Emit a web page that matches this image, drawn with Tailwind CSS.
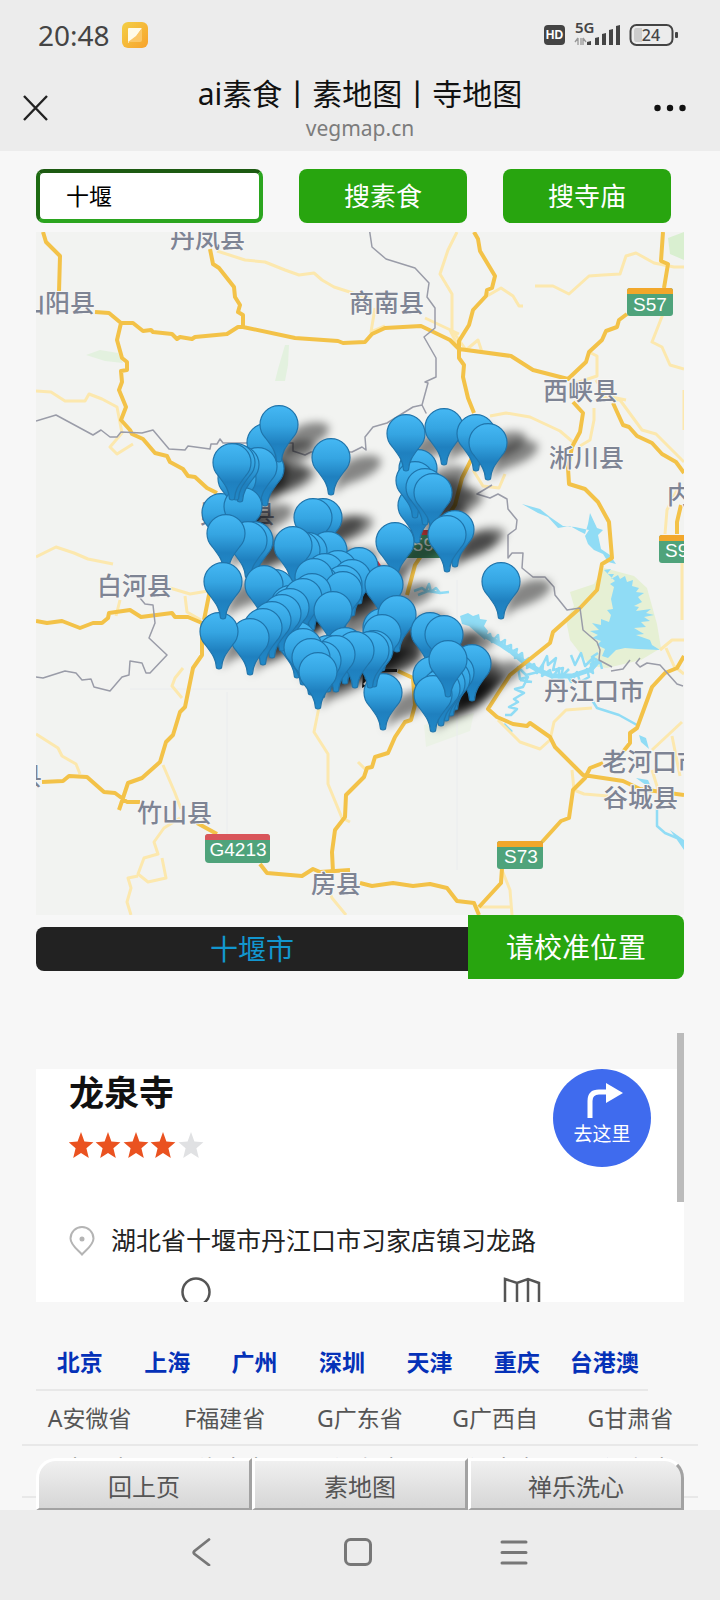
<!DOCTYPE html>
<html lang="zh-CN">
<head>
    <meta charset="UTF-8">
    <meta name="viewport" content="width=device-width, initial-scale=1.0">
    <title>ai素食丨素地图丨寺地图</title>
    <script src="https://cdn.jsdelivr.net/npm/@tailwindcss/browser@4"></script>
</head>
<body class="bg-[#f7f7f7] font-['Noto_Sans','Noto_Sans_CJK_SC',sans-serif] text-[#111]">

    <!-- Status bar + title -->
    <header class="bg-[#ececec]">
        <div class="flex h-[70px] items-center justify-between pl-[38px] pr-[42px]">
            <div class="flex items-center gap-3 text-[28px] leading-none text-[#444]">
                <span>20:48</span>
                <svg class="size-[26px]" viewBox="0 0 26 26">
                    <defs>
                        <linearGradient id="app" x1="0" y1="0" x2="1" y2="1"><stop offset="0" stop-color="#f3cf45"/><stop offset="1" stop-color="#f8a22c"/></linearGradient>
                    </defs>
                    <rect width="26" height="26" rx="6" fill="url(#app)"/>
                    <path d="M6 7q0-1 1-1h13L14 15l-8 6z" fill="#fffbe8"/>
                    <path d="M20 6v12q0 2-2 2H6l8-6z" fill="#fbc766"/>
                </svg>
            </div>
            <div class="flex items-center text-[#444]">
                <svg class="h-[30px] w-[136px]" viewBox="0 0 136 30" fill="currentColor">
                    <rect x="2" y="5" width="21" height="20" rx="4"/>
                    <text x="12.500" y="19" text-anchor="middle" font-family="Liberation Sans" font-size="12" font-weight="700" fill="#fff">HD</text>
                    <text x="33" y="13" font-family="Noto Sans" font-size="15" font-weight="600">5G</text>
                    <path d="M36 18v7M36 18l-3 4M39 18v7M41 18v7M41 18l3 4" stroke="#999" stroke-width="1.300" fill="none"/>
                    <path d="M45 22l4-1v4h-4zM53 18l4-1v8h-4zM60 14l4-1v12h-4zM67 10l4-1v16h-4zM74 6l4-1v20h-4z"/>
                    <rect x="88.500" y="5" width="42" height="20" rx="6" fill="none" stroke="currentColor" stroke-width="2"/>
                    <path d="M94 8h6v14h-6q-2 0-2-3v-8q0-3 2-3z" fill="#ccc"/>
                    <rect x="133" y="12" width="3" height="6" rx="1"/>
                    <text x="109" y="21" text-anchor="middle" font-family="Noto Sans" font-size="16" font-weight="500">24</text>
                </svg>
            </div>
        </div>
        <div class="flex h-[81px] justify-between pr-[34px] pl-[22px]">
            <button class="mt-6 h-7 w-11" aria-label="关闭">
                <svg class="size-7" viewBox="0 0 28 28" fill="none" stroke="#222" stroke-width="2.400"><path d="M2 2l23 24M25 2L2 26"/></svg>
            </button>
            <div class="text-center">
                <h1 class="mt-1 text-[30px] leading-[40px]">ai素食丨素地图丨寺地图</h1>
                <p class="text-[21px] leading-7 text-[#7c7c7c]">vegmap.cn</p>
            </div>
            <button class="mt-6 h-7 w-8" aria-label="更多">
                <svg class="h-7 w-8" viewBox="0 0 32 28" fill="#111"><circle cx="3.500" cy="14" r="3.200"/><circle cx="16" cy="14" r="3.200"/><circle cx="28.500" cy="14" r="3.200"/></svg>
            </button>
        </div>
    </header>

    <main>
        <!-- Search -->
        <form class="mx-9 mt-[18px] flex h-[54px] gap-9 pr-[13px] text-[26px] text-white" onsubmit="return false">
            <input type="text" value="十堰" aria-label="城市" class="w-[227px] rounded-lg border-4 border-t-[#1d5a12] border-r-[#2ba51f] border-b-[#2ba51f] border-l-[#1d6a12] bg-white pl-[26px] text-[23px] text-black outline-none">
            <button type="submit" class="flex-1 rounded-lg bg-[#28a50f]">搜素食</button>
            <button type="submit" class="flex-1 rounded-lg bg-[#28a50f]">搜寺庙</button>
        </form>

        <!-- Map -->
        <svg id="map" class="mx-9 mt-[9px] block w-[calc(100%-72px)] bg-[#f2f3f1]" viewBox="36 232 648 683" fill="none" stroke-linejoin="round">
            <defs>
                <linearGradient id="pinFill" x1="0" y1="0" x2="0" y2="1">
                    <stop offset="0" stop-color="#45b8f4"/><stop offset=".35" stop-color="#35a5e2"/><stop offset=".68" stop-color="#1f80bf"/><stop offset="1" stop-color="#2189c8"/>
                </linearGradient>
                <path id="pin" d="M-2.500 37C-3 28-6 24-13.500 14A19 19 0 1 1 13.500 14C6 24 3 28 2.500 37Q0 39-2.500 37z" fill="url(#pinFill)" stroke="#1f74ab" stroke-width="1.200"/>
                <path id="shade" d="M0 38C8 27 4 18 12 9C22-4 50-4 50 4C50 16 26 24 14 28z" fill="#000"/>
                <filter id="soft" x="-20%" y="-20%" width="140%" height="140%"><feGaussianBlur stdDeviation="4"/></filter>
            </defs>

            <!-- parks -->
            <g fill="#e3f1df">
                <path d="M86 355l14-5 18 3 5 10-18-2zM285 345l4 0-1 20-3 16-10 0 3-12z"/>
                <path d="M668 238l16-6v28l-14-6z" fill="#d9efd0"/>
                <path d="M570 592l24-8 10-16 30 8 13 12 10 36 4 24-20 12-34 8-17-2-20-26-4-20 8-14z" fill="#e6f0d4"/>
                <path d="M424 725l50-12-4 18-44 16z" fill="#ebf2e6"/>
            </g>

            <!-- water -->
            <g fill="#90dcf5">
                <path d="M604 570l7-1-4 5 7 0-3 5 7-4 2 4 5-3 2 6 6-2-1 6 7 2-3 4 8 1-6 4 4 5-8 4 5 1-3 4 15-2-5 4 8 2-10 2 6 4-9 1 5 5-12 1 10 6-8 1 14 5 2 5 8 5-22-1-13-1-9 2-8 8-6-2 3-7-8-4 4-4-9-3 6-3-8-4 9-1-7-7 9 2 0-6 8 3 2-7-4-5 6-1-2-10 3-12-4-3 5-3z"/>
                <path d="M522 504l16 9 10 4 10 11 12-2 9 5 6 3 3-10 2-11 7 15 6 2-5 5 3 14 9 6 6 9-8-2-5-8-9-4-6-6-3-8 4-6-14-3-12-1-13-9-10-8z"/>
                <path d="M460 616l8-3 5 3 6-2 1 5 7 1-3 6 4 5-3 9-7-6-9-8-7-2z"/>
                <path d="M639 735l7 3 3 11-8-7zM636 778l12 2 4 9-9-6zM670 830l14 10v10l-9-13z"/>
            </g>
            <g stroke="#90dcf5" stroke-width="2.500">
                <path d="M414 591l8-3 4 3 3-7 2 8 5-4 4 5 9-1M418 595l10-4 12 2"/>
                <path d="M484 630l3 7 3-3 2 8 6-7 1 9 6-4-1 8 7-3 0 7 6-3-2 9 7-5 1 9 6-4-2 10 7-4 3 9 6-9-1 12 8-6 2 8 7-10 0 12 8-5 4 7 6-10 3 10 9-5-2-8 6 4-2-9 6-4-5-3 6-4"/>
                <path d="M486 636l14 8 12 8 12 10 14 8 14 6 20 0 18-6 8-10" stroke-width="5"/>
                <path d="M543 664l4-8 1 9 8-7-3 12 10-2-2 9 8-8M571 655l4 10 6-12 4 13 8-8-1 12 8-9 2 8M538 672l-12 3-8-8 2 12 8-2-5 10-8 2 9 4-10 6 4 3-9 5 8 2-6 6-6 0M520 680l12 2M504 724l8 8"/>
                <path d="M592 700l5 8 22 7 18 10M657 808v18l8 7 12 5"/>
            </g>
            <path d="M130 689H466M227 692V834M457 580V870" stroke="#eaecee"/>

            <!-- minor roads -->
            <g stroke="#fce8ae" stroke-width="3">
                <path d="M217 251l28 9 20 2 20 8 14 5 15-2 8 7 12 7 25 8 10 4M36 391l15 1 14 9 20 0 4-7 13 5 15 8 5 26-12 14 7 7 16-10M36 557l20-10 18 6 14 6 25 5"/>
                <path d="M457 232l-9 18-8 24 12 20 0 36 14 20 12-10 4 12M535 286l18 0 16 8 20-18 14-1 17-1 6-18 10-3 18 10 20 4 18 0M663 314l-11 28 10 5 8 18 14 4M487 296l14-8 12 8 6 10 4 0M385 326l-14 6 4-24M425 318l34 16"/>
                <path d="M573 384l24-8 0-20-8-4M600 398l20 2 22 30 14 4 28 28M490 416l16-3 24 4 30 14 14 12M594 408l0 12-4 20-10 6M473 470l10 16 16 2 6-14M684 390v40M665 534l2-24 10-20M596 380l10 16 20 4"/>
                <path d="M170 588l20 6 18-3M185 596l2 16 14 8M120 600l-4 16M183 668l-8 10-3 8 10 12M163 765l12 28 6 16M36 734l22 14 4 8 14 8 4 10M180 818l-16 10-10 14 4 12-14 4-6 16 10 8 18-4-4-20M138 876l-10 2 3 10-4 14 4 13M320 702l-6 30 14 22 0 30 14 34 8 4M324 878l8 20 14 17M358 762l8 8"/>
                <path d="M498 720l22 22 20 7 10-9 4-18 12-12 26-2M572 770l2 20 10 4 24 2M660 650l12-10h12M666 648l8 18 10 8M652 750l30-28M672 736l8 40M652 770l8 26M502 870l8 20 2 25M478 907h32M682 560v60M460 350l-10-20"/>
            </g>

            <!-- main roads -->
            <g stroke="#f3c248" stroke-width="4">
                <path d="M43 232l3 10 14 14-1 36M95 312l14 1 12 10h12l10 8 8-1 2 2 19 2 5 5 3-2 12 2 3-2 32-3 11-7h5l52 11 43 3 5 2 22-1 7-8 13-6 36-2 29 14 9 9 52 7 22 14 35 9 18-17 3-10 13-12 4-9 11-4 2-7 8-6M210 249l3 15 6 4 15 19 1 10 5 8-2 7 5 3v12M121 323l-4 17 5 18 5 4v8l-6 1 1 11-3 8 7 17-5 13 9 10 2 4 11 5 12 14 12 3 3 6 13 7 5 7 7 1 12 11 10 5M474 232l4 7 2 12 15 25-3 12-5 2-1 6-13 14-4 15-10 16v17l5 7-1 12 5 21 6 15M472 458l-10 20-7 27-40 60-8 30M573 402l10 11-3 19-8 15-4 21 1 16 16 5 13 13 11 20 3 36-10 6-5 26-17 18-27 24-3 11-40 32-13 20-9 14 9 8 16 7 14 2 3-3 20 14 5 10 28 28 40 6 17 8 44 6M613 403l10 22 6 2 8 9 15 7 10 11 14 8 8 11M663 232l-2 29 7 3-4 24M681 505l-4 17v12M684 656l-7 12-12 5-13 14-15 41-7 5v10l-8 10M603 763l-13 5-5 10-12 12-4 28-8 3-19 21M502 868l-1 15-22 24M360 883l12 3 21-3 20 3 17-2 17 4 10 13 17 2 5 12M333 872l-1-20 3-22 10-13 1-22 18-18 3-9 5-1 3-10 13-4 7-16 10-15 6-2 4-15-2-27-15-7M36 621l11 2 15-2 18 7 13-5 9 0 6-5 1-5 21-3 11 7 31-4 3 4h13l14 6v32l-9 13-8 39-5 5-7 23-7 7-6 20-18 16-14 5-9 27M42 782l21-1 6-5 18 1 17 15 11 1 12 9h13M197 823l20 11M260 864l7 9 35 3 11-7 7 3 30-2M204 620l8-40"/>
            </g>

            <!-- borders -->
            <path stroke="#9a9ca8" stroke-width="1.500" d="M36 421l20-6 37 20 8-5 9 7h7l4-5 21 1 11-3 16 19 16 1 3-4 22 3 1-5h6l3-5 3 4h70v8l12 4 6-3h41l10-5 4 3-1-13 8-10 14-4 26-16 9-2 4 8-4-8 6-22-3-1 11-5v-19l-12-21 11-9v-20l-8-11 2-14-14-15-29-9-14-12-3-20M492 485l-15 9 13 4 8-4 9 5 1 10 9 11-1 9-8 6v23l4-5h11l-1 15 11 9h12l9 10 1 8 12 15 13-2 3 22 14 12 3 8-1 10 13 7M611 671l12-2 7-9M640 658l-4 5 4 4 7-4 13 2 17 19 6 2M140 598l5 6 8 1 2 18-6 15 18 17-17 18h-4l-4-10-12-2-1 14-7 2-12 14-16-4-3-8-9 1-6-7-11-2-22 7-7-1"/>

            <!-- place names -->
            <g font-family="Noto Sans CJK SC" font-size="25" font-weight="500" fill="#7e8494" stroke="#f6f6f4" stroke-width="2" paint-order="stroke">
                <text x="170" y="248">丹凤县</text>
                <text x="20" y="312">山阳县</text>
                <text x="349" y="312">商南县</text>
                <text x="543" y="400">西峡县</text>
                <text x="549" y="467">淅川县</text>
                <text x="667" y="504">内乡县</text>
                <text x="97" y="595">白河县</text>
                <text x="200" y="523">郧西县</text>
                <text x="544" y="700">丹江口市</text>
                <text x="602" y="771">老河口市</text>
                <text x="603" y="807">谷城县</text>
                <text x="137" y="822">竹山县</text>
                <text x="311" y="893">房县</text>
                <text x="17" y="785">县</text>
            </g>

            <!-- road shields -->
            <g font-family="Liberation Sans" font-size="19" fill="#fff" stroke="none" text-anchor="middle">
                <rect x="627" y="288" width="46" height="28" rx="3" fill="#4fa37b"/><path d="M627 294v-3q0-3 3-3h40q3 0 3 3v3z" fill="#f2a72b"/><text x="650" y="311">S57</text>
                <rect x="659" y="535" width="46" height="28" rx="3" fill="#4fa37b"/><path d="M659 541v-3q0-3 3-3h40q3 0 3 3v3z" fill="#f2a72b"/><text x="682" y="557">S95</text>
                <rect x="497" y="841" width="46" height="28" rx="3" fill="#4fa37b"/><path d="M497 847v-3q0-3 3-3h40q3 0 3 3v3z" fill="#f2a72b"/><text x="521" y="863">S73</text>
                <rect x="205" y="834" width="65" height="29" rx="4" fill="#4fa37b"/><path d="M205 840v-3q0-3 3-3h59q3 0 3 3v3z" fill="#d9555a"/><text x="238" y="856">G4213</text>
                <rect x="398" y="530" width="50" height="28" rx="3" fill="#3e8660"/><path d="M398 535v-5h50v5z" fill="#c63a3c"/><text x="416" y="551" fill="#d5ddd6">G59</text>
            </g>

            <g id="shadows" filter="url(#soft)"></g>
            <path d="M366 562l12-1 4 6-12 2z" fill="#d3202c"/>
            <path d="M382 669h15v3h-15zM363 674l5-2 0 4-4 2 3 2-4 4 3 2-4 2z" fill="#111"/>
            <g id="pins"></g>
        </svg>

        <!-- Current city -->
        <div class="mx-9 flex h-[64px] text-[28px]">
            <div class="mt-3 flex h-11 flex-2 items-center justify-center rounded-l-lg bg-[#222] text-[#1296cf]">十堰市</div>
            <button class="flex-1 rounded-r-lg bg-[#28a50f] text-white">请校准位置</button>
        </div>

        <!-- Result list -->
        <section class="relative mx-9 mt-[54px] h-[269px] overflow-hidden pt-9">
            <article class="h-[400px] bg-white px-[33px]">
                <div class="flex h-[153px] justify-between">
                    <div>
                        <h2 class="text-[35px] leading-[48px] font-bold">龙泉寺</h2>
                        <svg class="mt-[14px] h-7 w-[138px]" viewBox="0 0 138 28" role="img" aria-label="4 / 5">
                            <defs><path id="star" d="M12 1l3.400 9.600 9 .6-7 6 2.400 9.800-7.800-5-7.800 5 2.400-9.800-7-6 9-.6z"/></defs>
                            <g fill="#ea5220"><use href="#star"/><use href="#star" x="27"/><use href="#star" x="55"/><use href="#star" x="82"/></g>
                            <use href="#star" x="110" fill="#e0e1e3"/>
                        </svg>
                    </div>
                    <a href="#" class="flex size-[98px] flex-col items-center gap-1 rounded-full bg-[#3f6bee] pt-[11px] text-[19px] leading-6 text-white">
                        <svg class="ml-1 h-[38px] w-10" viewBox="0 0 40 38"><path d="M6 38V21q0-9 9-9h9" fill="none" stroke="#fff" stroke-width="5"/><path d="M22 3l17 10-17 10z" fill="#fff"/></svg>
                        去这里
                    </a>
                </div>
                <p class="flex h-[38px] items-center gap-4 text-[25px] text-[#222]">
                    <svg class="h-[30px] w-[26px]" viewBox="0 0 26 30" fill="none" stroke="#b4b4b4" stroke-width="2"><path d="M13 28.500C9 24 1.500 19 1.500 12.500a11.500 11.500 0 0 1 23 0C24.500 19 17 24 13 28.500z"/><circle cx="13" cy="13" r="1.500" fill="#b4b4b4"/></svg>
                    湖北省十堰市丹江口市习家店镇习龙路
                </p>
                <div class="-mx-[33px] mt-[17px] flex justify-around">
                    <svg class="size-10" viewBox="0 0 40 40" fill="none" stroke="#555" stroke-width="2.500"><circle cx="18" cy="15" r="13.500"/><path d="M27 25l10 10"/></svg>
                    <svg class="size-10" viewBox="0 0 40 40" fill="none" stroke="#555" stroke-width="2.500"><path d="M3 2l12 4 11-4 11 4v30l-11-4-11 4-12-4zM15 6v30M26 2v30"/></svg>
                </div>
            </article>
            <div class="absolute top-0 right-0 h-[169px] w-[7px] bg-[#bbb]"></div>
        </section>

        <!-- Regions -->
        <nav class="relative h-[208px] overflow-hidden pt-[34px]">
            <div class="mr-[72px] ml-9 grid h-[55px] grid-cols-7 items-center border-b-2 border-[#e8e8e8] text-center text-[23px] font-bold text-[#0531b8]">
                <a href="#">北京</a><a href="#">上海</a><a href="#">广州</a><a href="#">深圳</a><a href="#">天津</a><a href="#">重庆</a><a href="#" class="whitespace-nowrap">台港澳</a>
            </div>
            <div class="mx-[22px] grid h-[55px] grid-cols-5 items-center border-b-2 border-[#e8e8e8] pt-[2px] text-center text-[23px] text-[#555]">
                <a href="#">A安微省</a><a href="#">F福建省</a><a href="#">G广东省</a><a href="#">G广西自</a><a href="#">G甘肃省</a>
            </div>
            <div class="mx-[22px] grid h-[52px] grid-cols-5 items-start border-b-2 border-[#e8e8e8] pt-[5px] text-center text-[23px] text-[#555]">
                <a href="#">G贵州省</a><a href="#">H海南省</a><a href="#">H河北省</a><a href="#">H河南省</a><a href="#">H湖北省</a>
            </div>
            <div class="absolute inset-x-9 bottom-0 grid h-[52px] grid-cols-3 text-[24px] text-[#555]">
                <button class="rounded-tl-[20px] border-t-3 border-r-3 border-b-2 border-l-3 border-t-white border-r-[#a2a2a2] border-b-[#a2a2a2] border-l-white bg-linear-to-b from-[#f0f0f0] to-[#d6d6d6] pt-1">回上页</button>
                <button class="border-t-3 border-r-3 border-b-2 border-l-3 border-t-white border-r-[#a2a2a2] border-b-[#a2a2a2] border-l-white bg-linear-to-b from-[#f0f0f0] to-[#d6d6d6] pt-1">素地图</button>
                <button class="rounded-tr-[20px] border-t-3 border-r-3 border-b-2 border-l-3 border-t-white border-r-[#a2a2a2] border-b-[#a2a2a2] border-l-white bg-linear-to-b from-[#f0f0f0] to-[#d6d6d6] pt-1">禅乐洗心</button>
            </div>
        </nav>
    </main>

    <!-- System navigation -->
    <footer class="flex h-[90px] items-start justify-center gap-32 bg-[#ececec] pt-7 pr-[5px]">
        <button aria-label="返回"><svg class="size-7" viewBox="0 0 28 28" fill="none" stroke="#777" stroke-width="2.800" stroke-linecap="round"><path d="M21 1.500L6.500 13q-1.500 1.500 0 3L21 27"/></svg></button>
        <button aria-label="主页"><svg class="size-7" viewBox="0 0 28 28" fill="none" stroke="#777" stroke-width="3"><rect x="1.500" y="1.500" width="25" height="25" rx="5"/></svg></button>
        <button aria-label="最近"><svg class="size-7" viewBox="0 0 28 28" fill="none" stroke="#777" stroke-width="3" stroke-linecap="round"><path d="M2 4h24M2 14.500h24M2 25h24"/></svg></button>
    </footer>

    <script>
        // marker positions, back to front
        const points = [
            [444, 427], [476, 433], [488, 442], [265, 468], [266, 442], [258, 466], [279, 424], [331, 457],
            [221, 512], [237, 478], [243, 506], [240, 464], [236, 462], [232, 462],
            [417, 505], [418, 468], [415, 480], [406, 433], [425, 487], [433, 492],
            [323, 517], [313, 517], [254, 540], [248, 540], [226, 533], [328, 550], [308, 551], [301, 550], [293, 545],
            [455, 529], [447, 534], [395, 541], [501, 581],
            [359, 566], [338, 569], [325, 572], [352, 578], [343, 584], [320, 584], [314, 577], [343, 590],
            [284, 600], [275, 588], [264, 584], [312, 592], [290, 604], [303, 597], [333, 610],
            [297, 640], [290, 607], [282, 613], [272, 620], [263, 627], [250, 637], [219, 631], [223, 581], [384, 584],
            [382, 627], [397, 614], [345, 646], [328, 654], [303, 647],
            [382, 633], [383, 692], [374, 649], [370, 650], [355, 650], [336, 654], [322, 660], [311, 657], [318, 671],
            [430, 631], [444, 634], [472, 663], [432, 675], [455, 672], [451, 678], [446, 683], [441, 688], [433, 694], [448, 659]
        ];
        const use = (href, [x, y], opacity) => {
            const el = document.createElementNS('http://www.w3.org/2000/svg', 'use');
            el.setAttribute('href', href);
            el.setAttribute('x', x);
            el.setAttribute('y', y);
            el.setAttribute('opacity', opacity);
            return el;
        };
        points.forEach(p => {
            document.getElementById('shadows').append(use('#shade', p, 0.45));
            document.getElementById('pins').append(use('#pin', p, 1));
        });
    </script>
</body>
</html>
